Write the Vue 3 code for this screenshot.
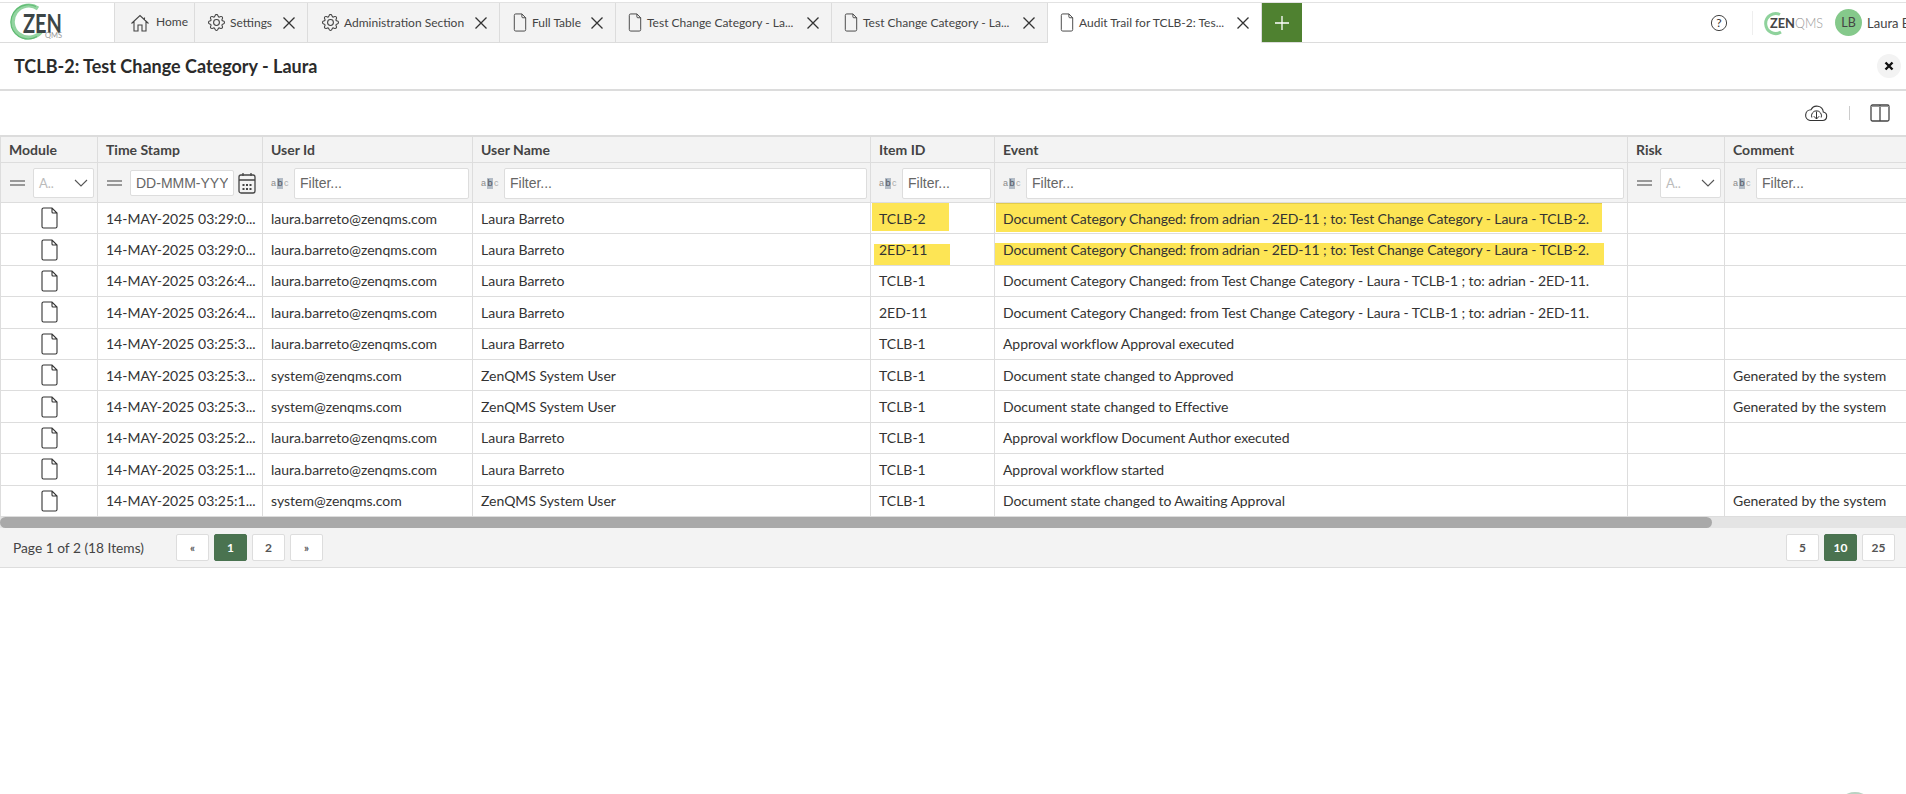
<template>
  <div class="page">
    <nav class="topbar">
      <div class="brand">
        <svg class="brand-logo" viewBox="0 0 114 39" width="114" height="39">
          <path d="M38 5.5A16 16 0 1 0 41 29" fill="none" stroke="#93d4a0" stroke-width="4" />
          <path d="M36 3.5A17.5 17.5 0 0 0 11.5 24A17.5 17.5 0 0 0 37 33.5" fill="none" stroke="#5fbb72" stroke-width="1.2" />
          <text x="23" y="30" class="brand-zen" textLength="39" lengthAdjust="spacingAndGlyphs">ZEN</text>
          <text x="45" y="35" class="brand-qms" textLength="17" lengthAdjust="spacingAndGlyphs">QMS</text>
        </svg>
      </div>
      <div
        v-for="tab in tabs"
        :key="tab.id"
        class="tab"
        :class="{ active: tab.active }"
        :style="{ width: tab.width + 'px', paddingLeft: tab.pad + 'px' }"
      >
        <svg v-if="tab.icon === 'home'" class="tab-icon home-icon" viewBox="0 0 20 20" width="20" height="20">
          <path d="M1.5 10.5 10 2.5l8.5 8M4 8.5V18h4v-6h4v6h4V8.5M14.5 4.5V7" fill="none" stroke="#444" stroke-width="1.1" />
        </svg>
        <svg v-else-if="tab.icon === 'gear'" class="tab-icon" viewBox="0 0 16 16" width="17" height="17" fill="#444">
          <path d="M8 4.754a3.246 3.246 0 1 0 0 6.492 3.246 3.246 0 0 0 0-6.492zM5.754 8a2.246 2.246 0 1 1 4.492 0 2.246 2.246 0 0 1-4.492 0z" />
          <path d="M9.796 1.343c-.527-1.79-3.065-1.79-3.592 0l-.094.319a.873.873 0 0 1-1.255.52l-.292-.16c-1.64-.892-3.433.902-2.54 2.541l.159.292a.873.873 0 0 1-.52 1.255l-.319.094c-1.79.527-1.79 3.065 0 3.592l.319.094a.873.873 0 0 1 .52 1.255l-.16.292c-.892 1.64.901 3.434 2.541 2.54l.292-.159a.873.873 0 0 1 1.255.52l.094.319c.527 1.79 3.065 1.79 3.592 0l.094-.319a.873.873 0 0 1 1.255-.52l.292.16c1.64.893 3.434-.902 2.54-2.541l-.159-.292a.873.873 0 0 1 .52-1.255l.319-.094c1.79-.527 1.79-3.065 0-3.592l-.319-.094a.873.873 0 0 1-.52-1.255l.16-.292c.893-1.64-.902-3.433-2.541-2.54l-.292.159a.873.873 0 0 1-1.255-.52l-.094-.319zm-2.633.283c.246-.835 1.428-.835 1.674 0l.094.319a1.873 1.873 0 0 0 2.693 1.115l.291-.16c.764-.415 1.6.42 1.184 1.185l-.159.292a1.873 1.873 0 0 0 1.116 2.692l.318.094c.835.246.835 1.428 0 1.674l-.319.094a1.873 1.873 0 0 0-1.115 2.693l.16.291c.415.764-.42 1.6-1.185 1.184l-.291-.159a1.873 1.873 0 0 0-2.693 1.116l-.094.318c-.246.835-1.428.835-1.674 0l-.094-.319a1.873 1.873 0 0 0-2.692-1.115l-.292.16c-.764.415-1.6-.42-1.184-1.185l.159-.291A1.873 1.873 0 0 0 1.945 8.93l-.319-.094c-.835-.246-.835-1.428 0-1.674l.319-.094A1.873 1.873 0 0 0 3.06 4.377l-.16-.292c-.415-.764.42-1.6 1.185-1.184l.292.159a1.873 1.873 0 0 0 2.692-1.115l.094-.319z" />
        </svg>
        <svg v-else class="tab-icon" viewBox="0 0 14 20" width="14" height="19">
          <path d="M2.5 1H9l4 4v12.5a1.5 1.5 0 0 1-1.5 1.5h-9A1.5 1.5 0 0 1 1 17.5v-15A1.5 1.5 0 0 1 2.5 1zM9 1v3a1 1 0 0 0 1 1h3" fill="none" stroke="#444" stroke-width="1" />
        </svg>
        <span class="tab-label" :class="{ 'home-label': tab.icon === 'home' }">{{ tab.label }}</span>
        <svg v-if="tab.closable" class="tab-close" viewBox="0 0 12 12" width="12" height="12">
          <path d="M.5.5l11 11M11.5.5l-11 11" stroke="#333" stroke-width="1.3" />
        </svg>
      </div>
      <div class="add-tab">
        <svg viewBox="0 0 14 14" width="14" height="14"><path d="M7 0v14M0 7h14" stroke="#fff" stroke-width="1.3" /></svg>
      </div>
      <div class="topbar-right">
        <svg class="help" viewBox="0 0 18 18" width="18" height="18">
          <circle cx="9" cy="9" r="7.6" fill="none" stroke="#444" stroke-width="1" />
          <text x="9" y="13" class="help-mark">?</text>
        </svg>
        <span class="vsep"></span>
        <svg class="wordmark" viewBox="0 0 64 28" width="64" height="28">
          <path d="M19 5.5A10 10 0 1 0 20 23" fill="none" stroke="#8fd29c" stroke-width="3" />
          <text x="9" y="18.5" class="mark-zen" textLength="25" lengthAdjust="spacingAndGlyphs">ZEN</text>
          <text x="34" y="18.5" class="mark-qms" textLength="28" lengthAdjust="spacingAndGlyphs">QMS</text>
        </svg>
        <span class="avatar">LB</span>
        <span class="user-name">Laura Barreto</span>
      </div>
    </nav>

    <header class="title-bar">
      <h1>TCLB-2: Test Change Category - Laura</h1>
      <button class="close-btn">
        <svg viewBox="0 0 10 10" width="10" height="10"><path d="M1.5 1.5l7 7M8.5 1.5l-7 7" stroke="#111" stroke-width="2.4" /></svg>
      </button>
    </header>

    <div class="toolbar">
      <svg viewBox="0 0 24 20" width="24" height="20">
        <path d="M6 17.5h12.5a4.3 4.3 0 0 0 .8-8.5A6.5 6.5 0 0 0 7 6.8 5.4 5.4 0 0 0 6 17.5z" fill="none" stroke="#333" stroke-width="1.1" />
        <path d="M7.8 14.5a5 5 0 1 1 9.4 0" fill="none" stroke="#333" stroke-width="1" />
        <path d="M12.5 8.5v7.5M9.8 13.2l2.7 2.8 2.7-2.8" fill="none" stroke="#333" stroke-width="1" />
      </svg>
      <span class="tool-sep"></span>
      <svg viewBox="0 0 20 18" width="20" height="18">
        <rect x="1" y="1" width="18" height="16" rx="1.5" fill="none" stroke="#444" stroke-width="1.3" />
        <path d="M10 1v16" stroke="#444" stroke-width="1.3" />
        <path d="M1 2.5h18" stroke="#999" stroke-width="1" />
      </svg>
    </div>

    <div class="table-wrap">
      <table class="audit-table">
        <colgroup>
          <col v-for="c in columns" :key="c.name" :style="{ width: c.width + 'px' }" />
        </colgroup>
        <thead>
          <tr class="head-row">
            <th v-for="c in columns" :key="c.name">{{ c.name }}</th>
          </tr>
          <tr class="filter-row">
            <td v-for="c in columns" :key="c.name">
              <div class="filter">
                <template v-if="c.filter === 'text'">
                  <span class="abc">a<b>b</b><i>c</i></span>
                  <input class="filter-input" placeholder="Filter..." />
                </template>
                <template v-else-if="c.filter === 'select'">
                  <span class="equals"></span>
                  <span class="filter-select">
                    <span>A..</span>
                    <svg viewBox="0 0 14 8" width="14" height="8"><path d="M1 1l6 6 6-6" fill="none" stroke="#555" stroke-width="1.1" /></svg>
                  </span>
                </template>
                <template v-else>
                  <span class="equals"></span>
                  <input class="date-input" placeholder="DD-MMM-YYYY" />
                  <svg class="cal" viewBox="0 0 18 22" width="18" height="22">
                    <rect x="1" y="3" width="16" height="18" rx="2" fill="none" stroke="#444" stroke-width="1.3" />
                    <path d="M1 8h16M5 1v3M13 1v3" stroke="#444" stroke-width="1.3" />
                    <path d="M4.5 12h2v2h-2zM8 12h2v2H8zM11.5 12h2v2h-2zM4.5 16h2v2h-2zM8 16h2v2H8zM11.5 16h2v2h-2z" fill="#444" />
                  </svg>
                </template>
              </div>
            </td>
          </tr>
        </thead>
        <tbody>
          <tr v-for="(row, i) in rows" :key="i">
            <td class="module-cell">
              <svg viewBox="0 0 17 22" width="17" height="22">
                <path d="M2.5 1H11l5 5v13.5a1.5 1.5 0 0 1-1.5 1.5h-12A1.5 1.5 0 0 1 1 19.5v-17A1.5 1.5 0 0 1 2.5 1zM11 1v4a1 1 0 0 0 1 1h4" fill="none" stroke="#333" stroke-width="1.1" />
              </svg>
            </td>
            <td>{{ row.time }}</td>
            <td>{{ row.userId }}</td>
            <td>{{ row.userName }}</td>
            <td class="marked">
              <span v-if="i < 2" class="marker" :class="'item-' + i"></span>
              <span class="cell-text">{{ row.item }}</span>
            </td>
            <td class="marked event-cell">
              <span v-if="i < 2" class="marker" :class="'event-' + i"></span>
              <span class="cell-text">{{ row.event }}</span>
            </td>
            <td></td>
            <td>{{ row.comment }}</td>
          </tr>
        </tbody>
      </table>
    </div>

    <div class="scrollbar"><div class="thumb"></div></div>

    <footer class="pager">
      <span class="page-info">Page 1 of 2 (18 Items)</span>
      <div class="pages">
        <button class="pg small">«</button>
        <button class="pg on">1</button>
        <button class="pg">2</button>
        <button class="pg small">»</button>
      </div>
      <div class="sizes">
        <button class="pg">5</button>
        <button class="pg on">10</button>
        <button class="pg">25</button>
      </div>
    </footer>

    <span class="launcher"></span>
  </div>
</template>

<script setup>
const tabs = [
  { id: 1, label: 'Home', icon: 'home', width: 80, pad: 15 },
  { id: 2, label: 'Settings', icon: 'gear', width: 113, pad: 13, closable: true },
  { id: 3, label: 'Administration Section', icon: 'gear', width: 192, pad: 14, closable: true },
  { id: 4, label: 'Full Table', icon: 'doc', width: 116, pad: 13, closable: true },
  { id: 5, label: 'Test Change Category - La...', icon: 'doc', width: 216, pad: 12, closable: true },
  { id: 6, label: 'Test Change Category - La...', icon: 'doc', width: 216, pad: 12, closable: true },
  { id: 7, label: 'Audit Trail for TCLB-2: Tes...', icon: 'doc', width: 214, pad: 12, closable: true, active: true }
]

const columns = [
  { name: 'Module', width: 98, filter: 'select' },
  { name: 'Time Stamp', width: 165, filter: 'date' },
  { name: 'User Id', width: 210, filter: 'text' },
  { name: 'User Name', width: 398, filter: 'text' },
  { name: 'Item ID', width: 124, filter: 'text' },
  { name: 'Event', width: 633, filter: 'text' },
  { name: 'Risk', width: 97, filter: 'select' },
  { name: 'Comment', width: 395, filter: 'text' }
]

const laura = { userId: 'laura.barreto@zenqms.com', userName: 'Laura Barreto' }
const system = { userId: 'system@zenqms.com', userName: 'ZenQMS System User' }
const generated = 'Generated by the system'
const moved = 'Document Category Changed: from adrian - 2ED-11 ; to: Test Change Category - Laura - TCLB-2.'
const movedBack = 'Document Category Changed: from Test Change Category - Laura - TCLB-1 ; to: adrian - 2ED-11.'

const rows = [
  { time: '14-MAY-2025 03:29:0...', ...laura, item: 'TCLB-2', event: moved },
  { time: '14-MAY-2025 03:29:0...', ...laura, item: '2ED-11', event: moved },
  { time: '14-MAY-2025 03:26:4...', ...laura, item: 'TCLB-1', event: movedBack },
  { time: '14-MAY-2025 03:26:4...', ...laura, item: '2ED-11', event: movedBack },
  { time: '14-MAY-2025 03:25:3...', ...laura, item: 'TCLB-1', event: 'Approval workflow Approval executed' },
  { time: '14-MAY-2025 03:25:3...', ...system, item: 'TCLB-1', event: 'Document state changed to Approved', comment: generated },
  { time: '14-MAY-2025 03:25:3...', ...system, item: 'TCLB-1', event: 'Document state changed to Effective', comment: generated },
  { time: '14-MAY-2025 03:25:2...', ...laura, item: 'TCLB-1', event: 'Approval workflow Document Author executed' },
  { time: '14-MAY-2025 03:25:1...', ...laura, item: 'TCLB-1', event: 'Approval workflow started' },
  { time: '14-MAY-2025 03:25:1...', ...system, item: 'TCLB-1', event: 'Document state changed to Awaiting Approval', comment: generated }
]
</script>

<style>
html,
body {
  margin: 0;
  overflow: hidden;
  background: #fff;
}
</style>

<style scoped>
.page {
  position: relative;
  width: 1906px;
  height: 794px;
  overflow: hidden;
  font-family: Lato, "Liberation Sans", sans-serif;
  font-size: 14px;
  color: #333;
  padding-top: 2px;
  box-sizing: border-box;
}

.topbar {
  display: flex;
  height: 41px;
  border-top: 1px solid #e2e2e2;
  border-bottom: 1px solid #dcdcdc;
  box-sizing: border-box;
}

.brand {
  width: 115px;
  flex: none;
  box-sizing: border-box;
  border-right: 1px solid #dcdcdc;
}

.brand-logo {
  display: block;
}

.brand-zen {
  font: 700 26px Lato, sans-serif;
  fill: #3c4647;
}

.brand-qms {
  font: 400 8px Lato, sans-serif;
  fill: #999;
}

.tab {
  display: flex;
  align-items: center;
  flex: none;
  box-sizing: border-box;
  background: #f3f3f3;
  border-right: 1px solid #dcdcdc;
  font-size: 12px;
  color: #444;
}

.tab.active {
  background: #fff;
  height: 40px;
  border-bottom: 1px solid #fff;
}

.tab-icon {
  flex: none;
  margin-right: 5px;
}

.tab-label {
  white-space: nowrap;
  flex: 1;
}

.home-label {
  margin-top: -3px;
}

.home-icon {
  margin-right: 6px;
}

.tab-close {
  flex: none;
  margin-right: 12px;
}

.add-tab {
  width: 40px;
  flex: none;
  background: #4f8130;
  display: flex;
  align-items: center;
  justify-content: center;
}

.topbar-right {
  flex: 1;
  display: flex;
  align-items: center;
  padding-left: 408px;
  overflow: hidden;
  white-space: nowrap;
}

.help {
  flex: none;
}

.help-mark {
  font: 400 12px Lato, sans-serif;
  fill: #333;
  text-anchor: middle;
}

.vsep {
  flex: none;
  width: 1px;
  height: 24px;
  background: #eee;
  margin: 0 8px 0 24px;
}

.wordmark {
  flex: none;
}

.mark-zen {
  font: 700 14px Lato, sans-serif;
  fill: #444;
}

.mark-qms {
  font: 300 14px Lato, sans-serif;
  fill: #999;
}

.avatar {
  flex: none;
  width: 27px;
  height: 27px;
  margin-left: 10px;
  border-radius: 50%;
  background: #85c98b;
  color: #444;
  font-size: 12.5px;
  display: flex;
  align-items: center;
  justify-content: center;
}

.user-name {
  flex: none;
  margin-left: 5px;
  font-size: 13px;
  color: #444;
}

.title-bar {
  display: flex;
  align-items: center;
  justify-content: space-between;
  height: 48px;
  padding: 0 5px 0 14px;
  border-bottom: 2px solid #dcdcdc;
  box-sizing: border-box;
}

.title-bar h1 {
  margin: 0;
  font-size: 18px;
  font-weight: 700;
  color: #2b2b2b;
}

.close-btn {
  width: 24px;
  height: 24px;
  padding: 0;
  border: 0;
  border-radius: 50%;
  background: #f3f3f3;
  display: flex;
  align-items: center;
  justify-content: center;
}

.toolbar {
  height: 44px;
  display: flex;
  align-items: center;
  justify-content: flex-end;
  padding: 0 16px 0 0;
  box-sizing: border-box;
}

.toolbar svg {
  flex: none;
}

.tool-sep {
  width: 1px;
  height: 14px;
  background: #ccc;
  margin: 0 20px 0 21px;
}

.table-wrap {
  overflow: hidden;
  border-top: 2px solid #dcdcdc;
}

.audit-table {
  width: 2120px;
  table-layout: fixed;
  border-collapse: separate;
  border-spacing: 0;
}

.audit-table th,
.audit-table td {
  border-right: 1px solid #ddd;
  border-bottom: 1px solid #ddd;
  padding: 0 8px;
  white-space: nowrap;
  overflow: hidden;
}

.audit-table th:first-child,
.audit-table td:first-child {
  border-left: 1px solid #ddd;
}

.head-row th {
  height: 26px;
  box-sizing: border-box;
  background: #f3f3f3;
  text-align: left;
  font-weight: 700;
  font-size: 14px;
  color: #444;
}

.filter-row td {
  height: 40px;
  box-sizing: border-box;
  background: #f3f3f3;
  padding-right: 3px;
  padding-top: 1px;
}

.filter {
  display: flex;
  align-items: center;
}

.abc {
  flex: none;
  width: 23px;
  font: 400 9px "Liberation Sans", sans-serif;
  color: #8a8a8a;
  white-space: nowrap;
}

.abc b {
  display: inline-block;
  width: 6px;
  line-height: 11px;
  margin: 0 1px;
  text-align: center;
  font-weight: 400;
  background: #b4bcc6;
  color: #4a5560;
}

.abc i {
  font-style: normal;
  color: #aaa;
}

.filter-input,
.date-input {
  min-width: 0;
  box-sizing: border-box;
  height: 31px;
  padding: 0 5px;
  border: 1px solid #ddd;
  border-radius: 2px;
  background: #fff;
  font: 14px "Liberation Sans", Arial, sans-serif;
  outline: none;
}

.filter-input {
  flex: 1;
  width: 100%;
}

.filter-input::placeholder,
.date-input::placeholder {
  color: #666;
  opacity: 1;
}

.date-input {
  width: 104px;
  height: 26px;
  flex: none;
}

.cal {
  flex: none;
  margin-left: 4px;
}

.equals {
  flex: none;
  width: 15px;
  height: 2px;
  margin: 0 8px 0 1px;
  border-top: 2px solid #999;
  border-bottom: 2px solid #999;
}

.filter-select {
  flex: 1;
  min-width: 0;
  height: 30px;
  box-sizing: border-box;
  padding: 0 5px;
  border: 1px solid #ddd;
  border-radius: 2px;
  background: #fff;
  display: flex;
  align-items: center;
  justify-content: space-between;
  color: #bbb;
  font-size: 13px;
}

.audit-table tbody td {
  height: 31.4px;
  box-sizing: border-box;
  color: #333;
}

.module-cell {
  text-align: center;
}

.module-cell svg {
  display: block;
  margin: 0 auto;
}

.marked {
  position: relative;
}

.event-cell {
  letter-spacing: -0.08px;
}

.cell-text {
  position: relative;
}

/* hand drawn marker on the screenshot */
.marker {
  position: absolute;
  background: #fde555;
}

.item-0 {
  left: 1px;
  top: 0;
  width: 77px;
  height: 28px;
}

.item-1 {
  left: 3px;
  top: 10px;
  width: 76px;
  height: 21px;
}

.event-0 {
  left: 1px;
  top: 0;
  width: 606px;
  height: 29px;
  box-shadow: inset 0 1px 0 #e3cc4a;
}

.event-1 {
  left: -1px;
  top: 9px;
  width: 610px;
  height: 23px;
  box-shadow: inset 1px 0 0 #e3cc4a;
}

.scrollbar {
  height: 11px;
  background: #e4e4e4;
}

.thumb {
  width: 1712px;
  height: 100%;
  border-radius: 6px;
  background: #a9a9a9;
}

.pager {
  height: 40px;
  display: flex;
  align-items: center;
  box-sizing: border-box;
  padding: 0 11px 0 13px;
  background: #f3f3f3;
  border-bottom: 1px solid #ddd;
}

.page-info {
  width: 163px;
  font-size: 13.75px;
  color: #444;
}

.pages,
.sizes {
  display: flex;
  gap: 5px;
}

.sizes {
  margin-left: auto;
}

.pg {
  min-width: 33px;
  height: 27px;
  padding: 0;
  border: 1px solid #ddd;
  border-radius: 2px;
  background: #fff;
  font: 700 12px Lato, sans-serif;
  color: #555;
}

.pg.small {
  font-size: 11px;
}

.pg.on {
  background: #4a7350;
  border-color: #4a7350;
  color: #fff;
}

/* floating launcher, only its top edge is inside the window */
.launcher {
  position: absolute;
  left: 1836px;
  top: 792px;
  width: 38px;
  height: 38px;
  border-radius: 50%;
  background: #b9d2c2;
}
</style>
